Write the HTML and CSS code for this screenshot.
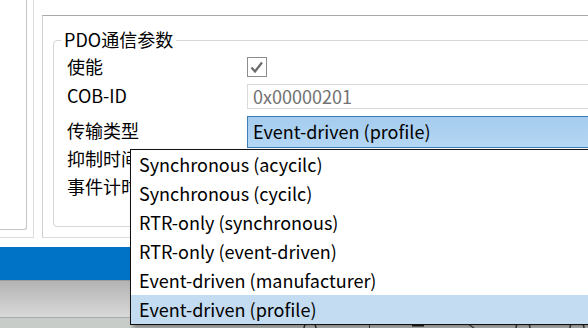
FILE: index.html
```html
<!DOCTYPE html>
<html lang="zh-CN">
<head>
    <meta charset="UTF-8">
    <meta name="viewport" content="width=device-width, initial-scale=1.0">
    <title>PDO通信参数</title>
    <link rel="stylesheet" href="styles.css">
</head>
<body>
    <div class="window">
        <div class="panes">
            <!-- left tree pane -->
            <div class="side">
                <div class="side-box"></div>
            </div>

            <!-- property pane -->
            <div class="main">
                <div class="group">
                    <div class="group-title">PDO通信参数</div>

                    <div class="row row-enable">
                        <span class="label">使能</span>
                        <span class="checkbox">
                            <svg width="20" height="20" viewBox="0 0 20 20">
                                <path d="M4.5 10.5 L8 14.5 L15 5.5" fill="none" stroke="#6b6b6b" stroke-width="2.2"/>
                            </svg>
                        </span>
                    </div>

                    <div class="row row-cob">
                        <span class="label">COB-ID</span>
                        <span class="input">0x00000201</span>
                    </div>

                    <div class="row row-type">
                        <span class="label">传输类型</span>
                        <span class="combo">Event-driven (profile)</span>
                    </div>

                    <div class="row row-inhibit">
                        <span class="label">抑制时间</span>
                    </div>

                    <div class="row row-timer">
                        <span class="label">事件计时</span>
                    </div>
                </div>
            </div>
        </div>

        <div class="status-bar"></div>
        <div class="taskbar"></div>
        <div class="taskbar-edge">
            <!-- tops of the tray icons, cut off by the screen edge -->
            <svg width="588" height="10" viewBox="0 0 588 10">
                <path d="M304 10 A6 6 0 0 1 316 10" fill="none" stroke="#333" stroke-width="1.5"/>
                <path d="M369.5 6 V10" stroke="#444" stroke-width="1"/>
                <path d="M412 7.5 H424" stroke="#222" stroke-width="2"/>
                <path d="M468 6 L474 10" stroke="#444" stroke-width="1.2"/>
                <path d="M516 10 A7 7 0 0 1 530 10" fill="none" stroke="#333" stroke-width="1.5"/>
                <path d="M570 10 A7 7 0 0 1 584 10" fill="none" stroke="#333" stroke-width="1.5"/>
            </svg>
        </div>

        <!-- open combo list -->
        <ul class="dropdown">
            <li>Synchronous (acycilc)</li>
            <li>Synchronous (cycilc)</li>
            <li>RTR-only (synchronous)</li>
            <li>RTR-only (event-driven)</li>
            <li>Event-driven (manufacturer)</li>
            <li class="selected">Event-driven (profile)</li>
        </ul>
    </div>
</body>
</html>
```

FILE: styles.css
```css
body {
    margin: 0;
    padding: 0;
    background-color: #fff;
    font-family: "Noto Sans CJK SC", "Noto Sans", sans-serif;
    color: #000;
}

.window {
    position: relative;
    width: 588px;
    height: 328px;
    overflow: hidden;
    background-color: #fff;
}

.panes {
    display: flex;
    height: 238px;
}

.side {
    width: 33px;
    height: 237px;
    border-right: 1px solid #dcdcdc;
    border-bottom: 1px solid #dcdcdc;
}

.side-box {
    width: 26px;
    height: 229px;
    border-right: 1px solid #c4c4c4;
    border-bottom: 1px solid #c4c4c4;
    border-bottom-right-radius: 3px;
}

.main {
    flex: 1;
    margin-left: 8px;
    margin-top: 15px;
    height: 221px;
    border-top: 1px solid #a9a9a9;
    border-left: 1px solid #d0d0d0;
    border-bottom: 1px solid #dcdcdc;
    overflow: hidden;
}

.group {
    margin: 24px 0 0 10px;
    width: 600px;
    height: 185px;
    padding-left: 13px;
    border: 1px solid #d6d6d6;
    border-radius: 4px;
}

.group-title {
    width: fit-content;
    margin: -12px 0 0 -6px;
    padding: 0 3px 2px;
    line-height: 20px;
    font-size: 18px;
    background-color: #fff;
}

.row {
    display: flex;
    align-items: center;
    font-size: 18px;
}

.label {
    width: 180px;
    line-height: 22px;
    padding-bottom: 3px;
}

.row-enable {
    margin-top: 4px;
    height: 24px;
}

.row-cob {
    margin-top: 4px;
    height: 27px;
}

.row-type {
    margin-top: 6px;
    height: 32px;
}

.row-type .label {
    padding-bottom: 5px;
}

.row-inhibit {
    height: 22px;
}

.row-timer {
    margin-top: 6px;
    height: 22px;
}

.checkbox {
    width: 18px;
    height: 18px;
    border: 1px solid #8c8c8c;
    display: flex;
}

.checkbox svg {
    margin: -1px;
}

.input {
    flex: 1;
    height: 23px;
    line-height: 23px;
    padding-left: 5px;
    border: 1px solid #dadada;
    color: #727272;
    font-size: 18px;
}

.combo {
    flex: 1;
    height: 30px;
    line-height: 29px;
    padding-left: 5px;
    border: 1px solid #3d7db4;
    background: linear-gradient(#a5ccee, #b4d7f4);
    font-size: 18px;
}

.status-bar {
    margin-top: 9px;
    height: 33px;
    background-color: #0173c6;
}

.taskbar {
    height: 36px;
    border-top: 1px solid #9c9c9c;
    background: linear-gradient(#b3b3b3, #d9d9d9);
}

.taskbar-edge {
    height: 10px;
    border-top: 1px solid #a9aaa9;
    background-color: #c8ccc8;
}

.taskbar-edge svg {
    display: block;
}

.dropdown {
    position: absolute;
    left: 130px;
    top: 149px;
    width: 480px;
    margin: 0;
    padding: 0;
    list-style: none;
    background-color: #fff;
    border: 1px solid #111;
    box-shadow: 3px 3px 4px rgba(0, 0, 0, 0.35);
    font-size: 18px;
}

.dropdown li {
    height: 29px;
    line-height: 28px;
    padding-left: 8px;
}

.dropdown li.selected {
    background-color: #c4dcf1;
}
```
